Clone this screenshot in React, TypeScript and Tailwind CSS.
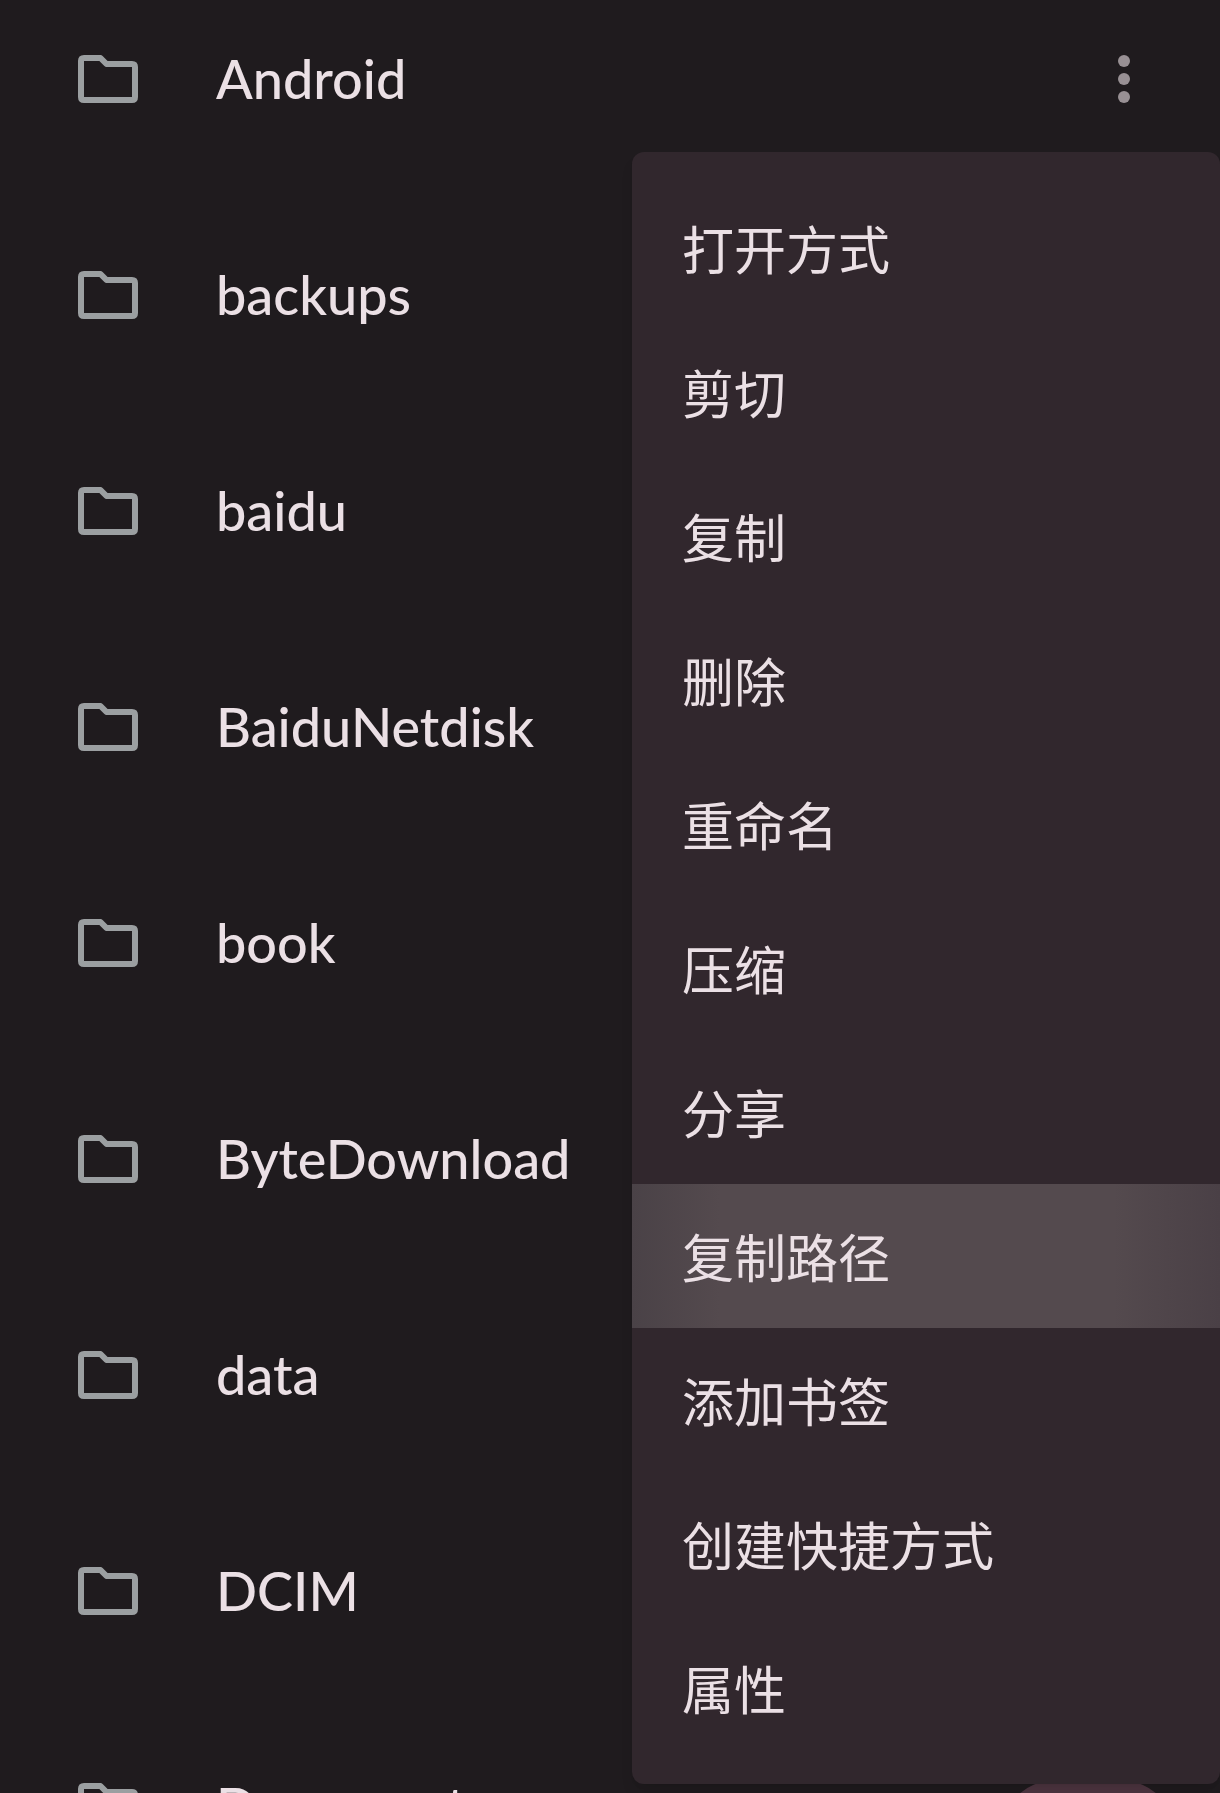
const folders = [
  'Android',
  'backups',
  'baidu',
  'BaiduNetdisk',
  'book',
  'ByteDownload',
  'data',
  'DCIM',
  'Documents',
];

const actions = [
  '打开方式',
  '剪切',
  '复制',
  '删除',
  '重命名',
  '压缩',
  '分享',
  '复制路径',
  '添加书签',
  '创建快捷方式',
  '属性',
];

const pressedAction = '复制路径';

function FolderIcon() {
  return (
    <svg viewBox="0 0 72 72" className="size-[72px] shrink-0" fill="none" aria-hidden="true">
      <path
        d="M12 15H28.5L34.5 21H60Q63 21 63 24V54Q63 57 60 57H12Q9 57 9 54V18Q9 15 12 15Z"
        stroke="#9b9fa1"
        strokeWidth="6"
        strokeLinejoin="round"
      />
    </svg>
  );
}

function MoreIcon() {
  return (
    <svg viewBox="0 0 72 72" className="size-[72px]" fill="#989094" aria-hidden="true">
      <circle cx="36" cy="18" r="6" />
      <circle cx="36" cy="36" r="6" />
      <circle cx="36" cy="54" r="6" />
    </svg>
  );
}

function FolderRow({ name }: { name: string }) {
  return (
    <li className="flex h-[158px] shrink-0 items-center pr-[60px] pl-[72px]">
      <a href={`#${name}`} className="flex flex-1 items-center gap-[72px]">
        <FolderIcon />
        <span className="font-['Lato','Noto_Sans',sans-serif] text-[54px] leading-[72px] font-medium">
          {name}
        </span>
      </a>
      <button type="button" aria-label={`${name} 更多`}>
        <MoreIcon />
      </button>
    </li>
  );
}

function ContextMenu() {
  return (
    <div
      role="menu"
      className="absolute top-[152px] right-0 flex w-[588px] flex-col rounded-xl bg-[#31272d] py-6 shadow-lg"
    >
      {actions.map((action) => (
        <button
          key={action}
          type="button"
          role="menuitem"
          className={
            action === pressedAction
              ? 'h-36 bg-[linear-gradient(to_right,#4a4247,#544a4e_15%,#544a4e_82%,#4a4046)] px-[50px] text-left'
              : 'h-36 px-[50px] text-left'
          }
        >
          {action}
        </button>
      ))}
    </div>
  );
}

export default function App() {
  return (
    <main
      lang="zh-CN"
      className="relative h-screen overflow-hidden bg-[#1f1b1e] font-['Noto_Sans_CJK_SC',sans-serif] text-[52px] leading-[76px] text-[#ebe0e5]"
    >
      <ul className="flex flex-col gap-[58px]">
        {folders.map((name) => (
          <FolderRow key={name} name={name} />
        ))}
      </ul>
      <button
        type="button"
        aria-label="新建"
        className="absolute right-12 -bottom-[156px] size-[168px] rounded-[48px] bg-[#4d3540]"
      />
      <ContextMenu />
    </main>
  );
}
